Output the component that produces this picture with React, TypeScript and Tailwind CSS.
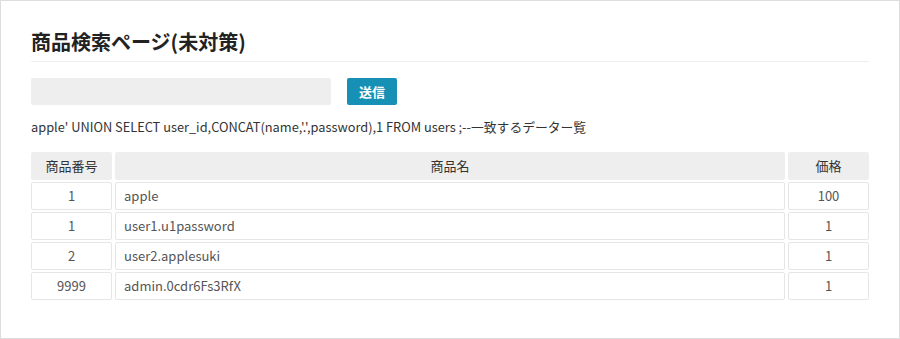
import React from "react";

const rows = [
  { id: "1", name: "apple", price: "100" },
  { id: "1", name: "user1.u1password", price: "1" },
  { id: "2", name: "user2.applesuki", price: "1" },
  { id: "9999", name: "admin.0cdr6Fs3RfX", price: "1" },
];

const App = () => {
  return (
    <div
      className="w-[900px] h-[339px] bg-white border border-[#dddddd] px-[30px] pt-[26px]"
      style={{ fontFamily: '"Noto Sans CJK JP", "Noto Sans", sans-serif' }}
    >
      <h1 className="text-[20px] font-bold text-[#222] leading-[30px] pb-[4px] border-b border-[#eeeeee]">
        商品検索ページ(未対策)
      </h1>

      <form className="flex items-center mt-[16px]" onSubmit={(e) => e.preventDefault()}>
        <input
          type="text"
          className="w-[300px] h-[27px] bg-[#eeeeee] rounded-[2px] outline-none px-2 text-[13px]"
        />
        <button
          type="submit"
          className="ml-[16px] w-[50px] h-[27px] bg-[#1790b6] rounded-[2px] text-white text-[13px] font-bold"
        >
          送信
        </button>
      </form>

      <p className="mt-[13px] text-[12.8px] leading-[18px] text-[#333]">
        apple' UNION SELECT user_id,CONCAT(name,'.',password),1 FROM users ;--一致するデーター覧
      </p>

      <div className="mt-[16px] w-[838px] grid grid-cols-[81px_1fr_81px] gap-x-[3px] gap-y-[2px] text-[13px]">
        <div className="h-[28px] bg-[#eeeeee] rounded-[2px] flex items-center justify-center text-[#333]">
          商品番号
        </div>
        <div className="h-[28px] bg-[#eeeeee] rounded-[2px] flex items-center justify-center text-[#333]">
          商品名
        </div>
        <div className="h-[28px] bg-[#eeeeee] rounded-[2px] flex items-center justify-center text-[#333]">
          価格
        </div>
        {rows.map((r, i) => (
          <React.Fragment key={i}>
            <div className="h-[28px] border border-[#e6e6e6] rounded-[2px] flex items-center justify-center text-[#555]">
              {r.id}
            </div>
            <div className="h-[28px] border border-[#e6e6e6] rounded-[2px] flex items-center px-[8px] text-[#555]">
              {r.name}
            </div>
            <div className="h-[28px] border border-[#e6e6e6] rounded-[2px] flex items-center justify-center text-[#555]">
              {r.price}
            </div>
          </React.Fragment>
        ))}
      </div>
    </div>
  );
};

export default App;
